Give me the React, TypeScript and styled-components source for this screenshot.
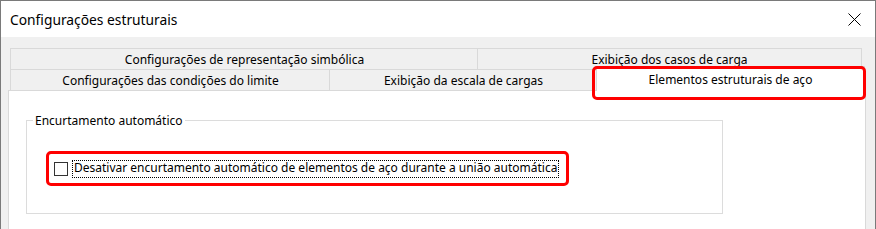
import React from 'react';
import styled, { createGlobalStyle } from 'styled-components';

const Global = createGlobalStyle`
  html, body { margin: 0; padding: 0; background: #fff; }
  body { font-family: "Noto Sans", "Segoe UI", sans-serif; }
  * { box-sizing: border-box; }
`;

const Window = styled.div`
  width: 876px;
  height: 229px;
  overflow: hidden;
  border: 1px solid #7a7a7a;
  border-bottom: none;
  display: flex;
  flex-direction: column;
  background: #f0f0f0;
`;

const TitleBar = styled.div`
  height: 36px;
  flex: none;
  background: #fff;
  display: flex;
  align-items: center;
  justify-content: space-between;
  padding: 0 14px 0 9px;
`;

const Title = styled.span`
  font-size: 13.8px;
  color: #000;
`;

const CloseButton = styled.div`
  width: 14px;
  height: 14px;
  display: flex;
  align-items: center;
  justify-content: center;
`;

const Body = styled.div`
  flex: 1;
  min-height: 0;
  display: flex;
  flex-direction: column;
  padding: 11px 9px 0 7px;
`;

const Tabs = styled.div`
  display: flex;
  flex-direction: column;
  margin: 0 3px 0 2px;
`;

const TabRow = styled.div`
  display: flex;
  height: 21px;
`;

const Tab = styled.div<{ $w: number; $selected?: boolean }>`
  position: relative;
  flex: none;
  width: ${p => p.$w}px;
  display: flex;
  align-items: center;
  justify-content: center;
  font-size: 12px;
  color: #000;
  white-space: nowrap;
  border: 1px solid #d9d9d9;
  border-bottom: none;
  background: ${p => (p.$selected ? '#fff' : '#f0f0f0')};
  & + & { margin-left: -1px; }
  ${p =>
    p.$selected &&
    `
    z-index: 2;
    margin: -3px -2px -1px -2px;
    width: ${p.$w + 4}px;
    & + & { margin-left: -2px; }
  `}
`;

const Highlight = styled.div`
  position: absolute;
  top: -1px;
  left: -5px;
  right: -2px;
  bottom: -9px;
  border: 3px solid #ff0000;
  border-radius: 5px;
  pointer-events: none;
`;

const Panel = styled.div`
  flex: 1;
  background: #fff;
  border: 1px solid #d9d9d9;
  border-bottom: none;
  padding: 21px 0 0 17px;
`;

const Group = styled.fieldset`
  margin: 0;
  padding: 0;
  width: 697px;
  border: 1px solid #dcdcdc;
  min-width: 0;
`;

const Legend = styled.legend`
  margin-left: 6px;
  padding: 0 2px;
  font-size: 12px;
  line-height: 17px;
  color: #000;
`;

const GroupContent = styled.div`
  padding: 22px 0 27px 19px;
`;

const CheckHighlight = styled.label`
  display: inline-flex;
  align-items: center;
  height: 35px;
  border: 3px solid #ff0000;
  border-radius: 5px;
  padding: 0 7px 0 5px;
`;

const Box = styled.span`
  width: 14px;
  height: 14px;
  flex: none;
  border: 1px solid #333;
  background: #fff;
`;

const CheckLabel = styled.span`
  margin-left: 4px;
  padding: 0 1px 2px 1px;
  border: 1px dotted #000;
  font-size: 12px;
  line-height: 14px;
  color: #000;
  white-space: nowrap;
`;

export default function App() {
  return (
    <>
      <Global />
      <Window>
        <TitleBar>
          <Title>Configurações estruturais</Title>
          <CloseButton>
            <svg width="13" height="13" viewBox="0 0 13 13">
              <path d="M0.5 0.5 L12.5 12.5 M12.5 0.5 L0.5 12.5" stroke="#000" strokeWidth="1" fill="none" />
            </svg>
          </CloseButton>
        </TitleBar>
        <Body>
          <Tabs>
            <TabRow>
              <Tab $w={469}>Configurações de representação simbólica</Tab>
              <Tab $w={385}>Exibição dos casos de carga</Tab>
            </TabRow>
            <TabRow>
              <Tab $w={321}>Configurações das condições do limite</Tab>
              <Tab $w={269}>Exibição da escala de cargas</Tab>
              <Tab $w={265} $selected>
                Elementos estruturais de aço
                <Highlight />
              </Tab>
            </TabRow>
          </Tabs>
          <Panel>
            <Group>
              <Legend>Encurtamento automático</Legend>
              <GroupContent>
                <CheckHighlight>
                  <Box />
                  <CheckLabel>Desativar encurtamento automático de elementos de aço durante a união automática</CheckLabel>
                </CheckHighlight>
              </GroupContent>
            </Group>
          </Panel>
        </Body>
      </Window>
    </>
  );
}
